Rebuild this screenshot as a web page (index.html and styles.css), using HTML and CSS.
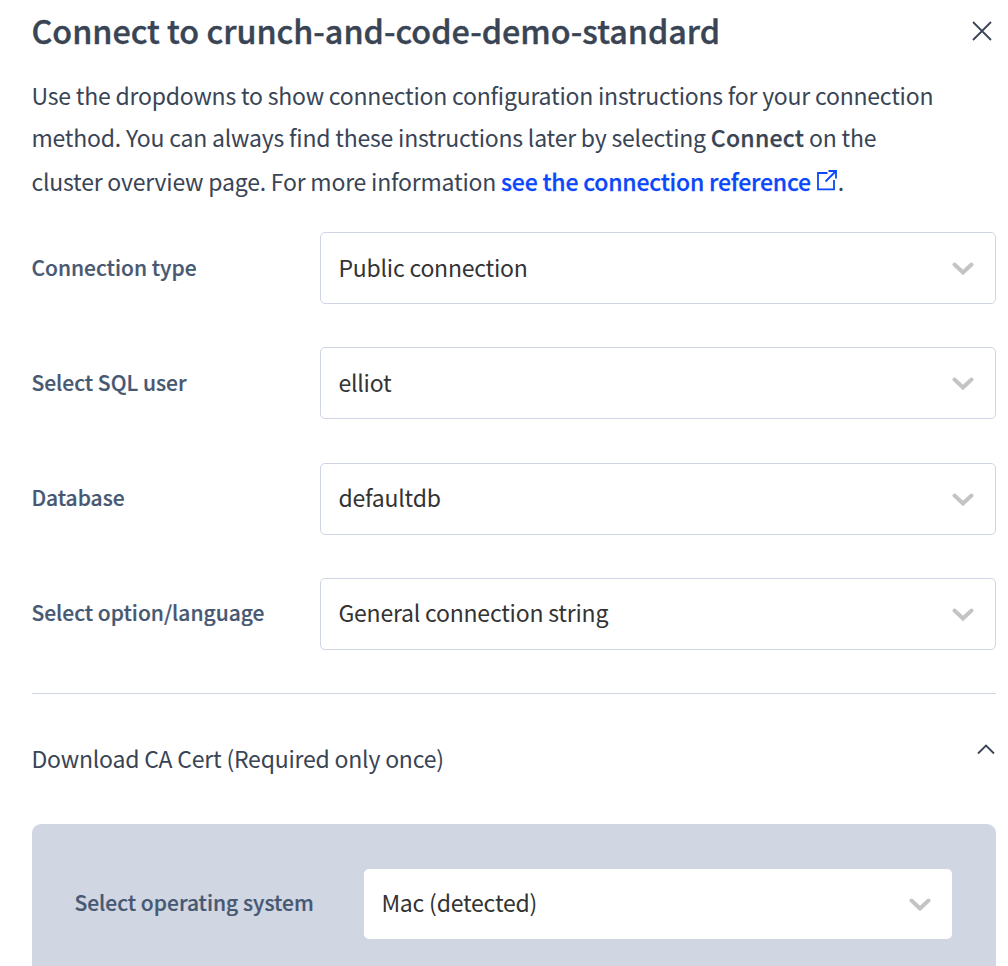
FILE: index.html
```html
<!DOCTYPE html>
<html lang="en">
<head>
<meta charset="utf-8">
<title>Connect</title>
<link rel="stylesheet" href="styles.css">
</head>
<body>
<main class="dialog">
  <header class="header">
    <h1 class="title">Connect to crunch-and-code-demo-standard</h1>
    <svg class="close" width="22" height="22" viewBox="0 0 22 22"><path d="M2 2L20 20M20 2L2 20"/></svg>
  </header>
  <p class="intro">
    <span class="line">Use the dropdowns to show connection configuration instructions for your connection</span>
    <span class="line">method. You can always find these instructions later by selecting <b>Connect</b> on the</span>
    <span class="line last">cluster overview page. For more information <a class="link">see the connection reference<svg class="ext" width="22" height="22" viewBox="0 0 22 22"><path d="M11.500 4H2V20.300H18V11M12.500 2H20V9.500M20 2L9.500 12.500"/></svg></a>.</span>
  </p>
  <section class="fields">
    <div class="field"><label class="label">Connection type</label><div class="select"><span class="value">Public connection</span><svg class="chev" width="22" height="14" viewBox="0 0 22 14"><path d="M2.500 2.500L11 10.500L19.500 2.500"/></svg></div></div>
    <div class="field"><label class="label">Select SQL user</label><div class="select"><span class="value">elliot</span><svg class="chev" width="22" height="14" viewBox="0 0 22 14"><path d="M2.500 2.500L11 10.500L19.500 2.500"/></svg></div></div>
    <div class="field"><label class="label">Database</label><div class="select"><span class="value">defaultdb</span><svg class="chev" width="22" height="14" viewBox="0 0 22 14"><path d="M2.500 2.500L11 10.500L19.500 2.500"/></svg></div></div>
    <div class="field"><label class="label">Select option/language</label><div class="select"><span class="value">General connection string</span><svg class="chev" width="22" height="14" viewBox="0 0 22 14"><path d="M2.500 2.500L11 10.500L19.500 2.500"/></svg></div></div>
  </section>
  <section class="download">
    <div class="summary"><span>Download CA Cert (Required only once)</span><svg class="up" width="18" height="11" viewBox="0 0 18 11"><path d="M1 9.500L9 1.500L17 9.500"/></svg></div>
    <div class="panel"><label class="label">Select operating system</label><div class="select os"><span class="value">Mac (detected)</span><svg class="chev" width="22" height="14" viewBox="0 0 22 14"><path d="M2.500 2.500L11 10.500L19.500 2.500"/></svg></div></div>
  </section>
</main>
</body>
</html>
```

FILE: styles.css
```css
* { box-sizing: border-box; }
body { margin: 0; background: #fff; color: #394455; font-family: "Noto Sans CJK SC", "Noto Sans", sans-serif; font-size: 23px; letter-spacing: -0.21px; text-indent: -0.6px; overflow: hidden; }
svg { fill: none; flex: none; }
.dialog { height: 966px; padding: 0 12px 0 32px; overflow: hidden; }
.header { display: flex; justify-content: space-between; align-items: flex-start; height: 64px; margin-right: 3px; }
.title { margin: 0; font-size: 32.300px; line-height: 60px; font-weight: 500; letter-spacing: 0; -webkit-text-stroke: 0.4px currentColor; }
.close { margin-top: 20px; stroke: #394455; stroke-width: 1.800; }
.intro { margin: 10px 0 0; white-space: nowrap; }
.line { display: block; height: 42px; line-height: 42px; }
.last { height: 46px; line-height: 46px; }
.intro b { font-weight: 500; letter-spacing: 0.250px; -webkit-text-stroke: 0.250px currentColor; }
.link { color: #0b47fb; font-weight: 500; -webkit-text-stroke: 0.250px currentColor; }
.ext { margin-left: 5px; stroke: #0b47fb; stroke-width: 1.800; vertical-align: 0; }
.fields { display: grid; gap: 43.300px; margin-top: 28px; padding-bottom: 43px; border-bottom: 1px solid #cfd5e2; }
.field { display: grid; grid-template-columns: 288px 1fr; align-items: center; }
.label { padding-bottom: 3px; color: #475872; font-size: 21px; font-weight: 500; letter-spacing: 0; white-space: nowrap; -webkit-text-stroke: 0.200px currentColor; }
.select { display: flex; align-items: center; justify-content: space-between; height: 72px; padding: 0 21px 0 18px; border: 1px solid #cfd5e4; border-radius: 5px; background: #fff; color: #333; }
.value { padding-bottom: 3px; }
.chev { margin-top: 2px; stroke: #c4c4c4; stroke-width: 4; stroke-linecap: round; }
.summary { display: flex; justify-content: space-between; height: 130px; line-height: 128px; }
.up { margin: 50px 1px 0 0; stroke: #394455; stroke-width: 1.800; }
.panel { display: grid; grid-template-columns: 289px 588px; align-items: center; height: 160px; padding: 0 43px; background: #d0d6e2; border-radius: 9px; }
.os { height: 70px; padding: 0 21px 0 18px; border: 0; }
```
